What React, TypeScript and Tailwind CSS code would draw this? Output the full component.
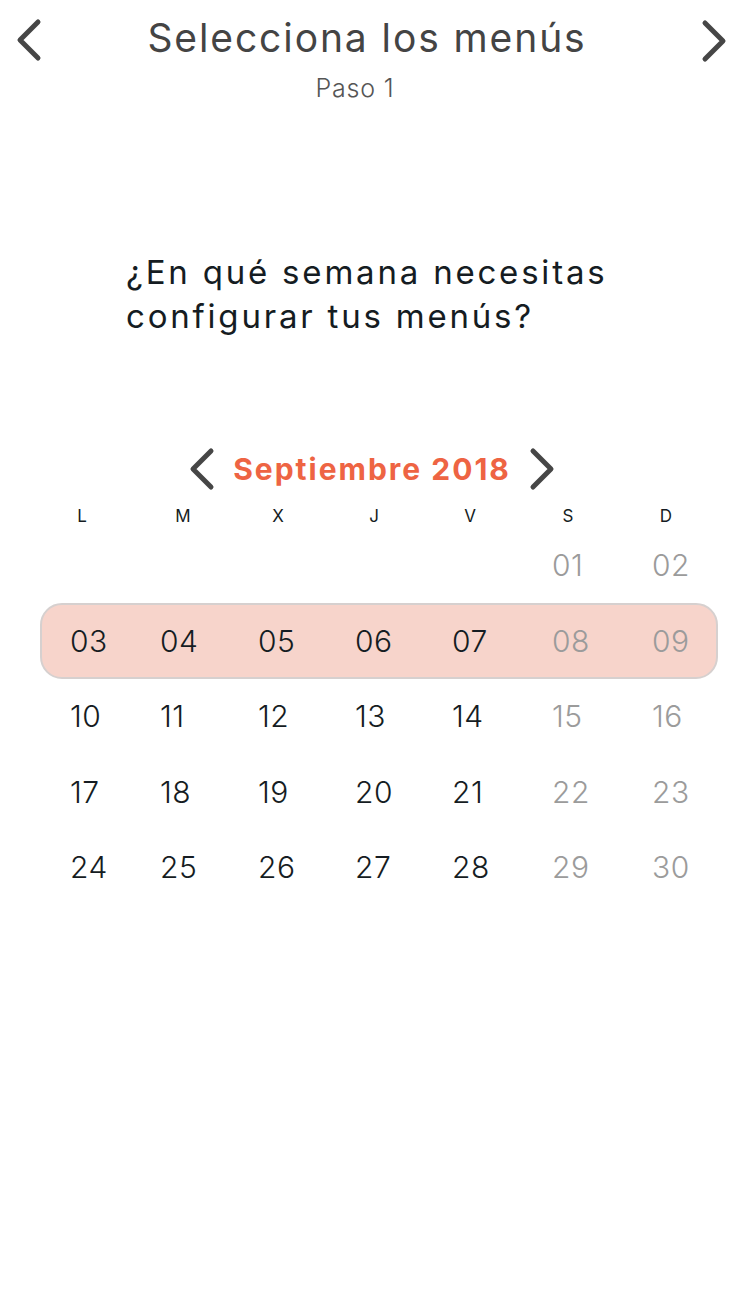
import React from "react";

function Chevron({ dir, className }: { dir: "left" | "right"; className?: string }) {
  return (
    <svg viewBox="0 0 30 44" className={className} fill="none">
      {dir === "left" ? (
        <polyline points="24,4 6,22 24,40" stroke="#464646" strokeWidth="5" strokeLinecap="round" strokeLinejoin="round" />
      ) : (
        <polyline points="6,4 24,22 6,40" stroke="#464646" strokeWidth="5" strokeLinecap="round" strokeLinejoin="round" />
      )}
    </svg>
  );
}

const weeks: (string | null)[][] = [
  [null, null, null, null, null, "01", "02"],
  ["03", "04", "05", "06", "07", "08", "09"],
  ["10", "11", "12", "13", "14", "15", "16"],
  ["17", "18", "19", "20", "21", "22", "23"],
  ["24", "25", "26", "27", "28", "29", "30"],
];

const days = ["L", "M", "X", "J", "V", "S", "D"];

export default function App() {
  return (
    <div className="w-[746px] h-[1292px] bg-white font-['Inter',sans-serif] text-[#151c22]">
      {/* Header */}
      <div className="flex items-start justify-between pl-[14px] pr-[17px] pt-[18px]">
        <Chevron dir="left" className="w-[30px] h-[44px]" />
        <div className="flex flex-col items-center mt-[-4px] mr-[9px]">
          <div className="text-[39px] leading-[48px] text-[#444444] tracking-[1.9px]">Selecciona los menús</div>
          <div className="mt-[10px] mr-[24px] text-[25px] leading-[32px] text-[#555555] font-light tracking-[0.8px]">Paso 1</div>
        </div>
        <Chevron dir="right" className="w-[30px] h-[44px] mt-[1px]" />
      </div>

      {/* Question */}
      <div className="mt-[146px] pl-[126px] text-[33px] leading-[44px] text-[#151c22] tracking-[2.8px]">
        ¿En qué semana necesitas
        <br />
        configurar tus menús?
      </div>

      {/* Month selector */}
      <div className="mt-[109px] flex items-center justify-center gap-[16px] pr-[2px]">
        <Chevron dir="left" className="w-[30px] h-[44px]" />
        <div className="text-[30px] leading-[44px] font-bold text-[#ee6443] tracking-[2px]">Septiembre 2018</div>
        <Chevron dir="right" className="w-[30px] h-[44px]" />
      </div>

      {/* Day headers */}
      <div className="mt-[15px] ml-[32px] grid grid-cols-[100px_102px_88px_104px_88px_108px_88px] text-[17px] leading-[20px]">
        {days.map((d) => (
          <div key={d} className="text-center">{d}</div>
        ))}
      </div>

      {/* Weeks */}
      <div className="flex flex-col mt-[1px]">
        {weeks.map((week, wi) => {
          const selected = wi === 1;
          return (
            <div
              key={wi}
              className={
                selected
                  ? "ml-[40px] w-[678px] h-[76px] rounded-[22px] border-2 border-[#d6d0cf] bg-[#f7d4cb] pl-[28px] grid grid-cols-[90px_98px_97px_97px_100px_100px_64px] items-center"
                  : "ml-[40px] w-[678px] h-[75.5px] border-2 border-transparent pl-[28px] grid grid-cols-[90px_98px_97px_97px_100px_100px_64px] items-center"
              }
            >
              {week.map((n, i) => (
                <div
                  key={i}
                  className={
                    "text-[30px] leading-[36px] font-light tracking-[0.5px] " + (i >= 5 ? "text-[#9b9b9b]" : "text-[#151c22]")
                  }
                >
                  {n ?? ""}
                </div>
              ))}
            </div>
          );
        })}
      </div>
    </div>
  );
}
